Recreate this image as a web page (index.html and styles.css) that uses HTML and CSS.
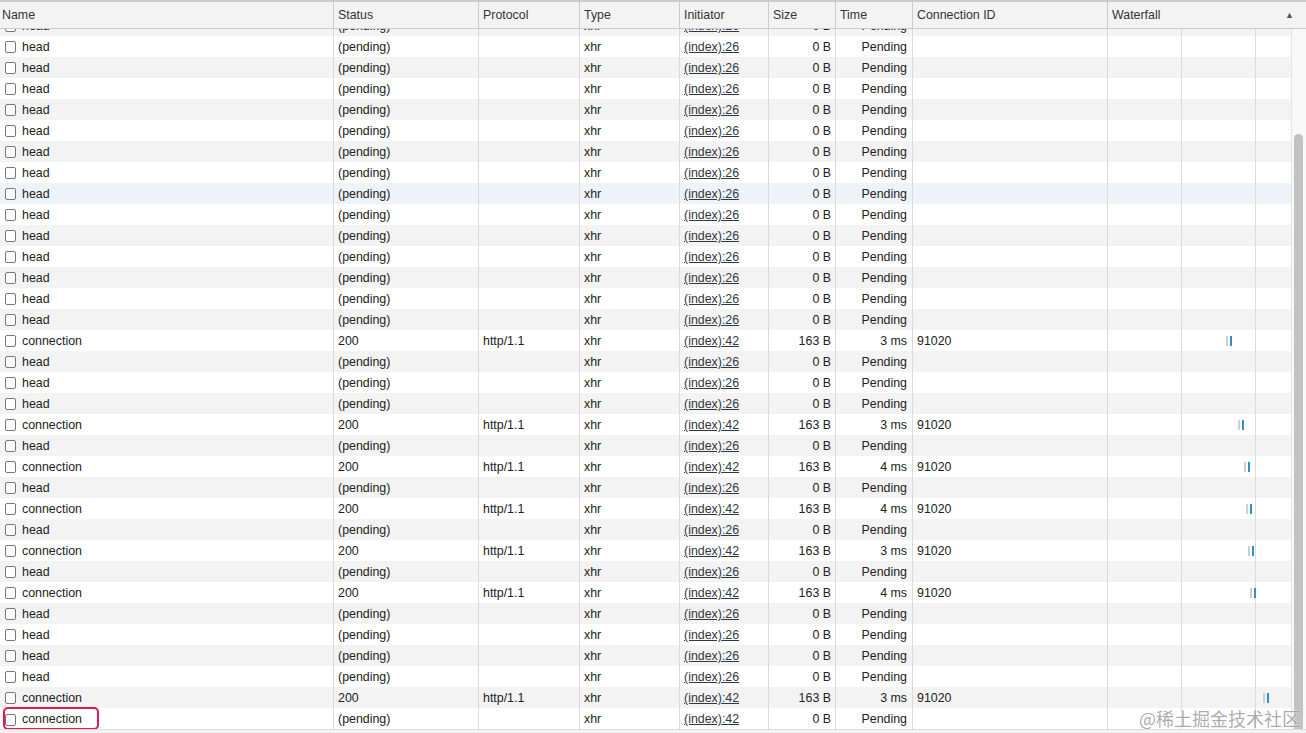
FILE: index.html
```html
<!doctype html>
<html>
<meta name="viewport" content="width=device-width, initial-scale=1">

<head>
  <title>Network</title>
  <link rel="stylesheet" href="styles.css">
</head>

<body>
  <div class="panel">
    <div class="row head-row">
      <div class="cell first">Name</div>
      <div class="cell">Status</div>
      <div class="cell">Protocol</div>
      <div class="cell">Type</div>
      <div class="cell">Initiator</div>
      <div class="cell">Size</div>
      <div class="cell">Time</div>
      <div class="cell">Connection ID</div>
      <div class="cell waterfall-head">Waterfall <span class="sort">&#9650;</span></div>
    </div>
    <div class="body">
      <div class="list" id="list"></div>
      <div class="scrollbar">
        <div class="thumb"></div>
      </div>
    </div>
    <div class="footer"></div>
    <div class="watermark">@稀土掘金技术社区</div>
  </div>
  <script>
    // h = head request, c = finished connection, p = pending connection
    let rows = "h hhhhhhhhhhhhhh chhh chc hc hc hc hhhh cp".replace(/ /g, "");
    let bars = [114, 126, 132, 134, 136, 138, 151];
    let times = ["3 ms", "3 ms", "4 ms", "4 ms", "3 ms", "4 ms", "3 ms"];
    let list = document.getElementById('list');
    let n = 0;
    for (let i = 0; i < rows.length; i++) {
      let k = rows[i];
      let row = document.createElement('div');
      row.className = 'row';
      if (i % 2 == 0) row.className += ' alt';
      if (i == 8) row.className += ' hover';
      let cells;
      if (k == 'c') {
        cells = ['connection', '200', 'http/1.1', 'xhr', '42', '163 B', times[n], '91020',
          '<span class="bar" style="margin-left:' + bars[n] + 'px"></span>'];
        n++;
      } else if (k == 'p') {
        cells = ['connection', '(pending)', '', 'xhr', '42', '0 B', 'Pending', '', ''];
      } else {
        cells = ['head', '(pending)', '', 'xhr', '26', '0 B', 'Pending', '', ''];
      }
      row.innerHTML =
        '<div class="cell first name' + (k == 'p' ? ' marked' : '') + '"><span class="check"></span>' + cells[0] + '</div>' +
        '<div class="cell">' + cells[1] + '</div>' +
        '<div class="cell">' + cells[2] + '</div>' +
        '<div class="cell">' + cells[3] + '</div>' +
        '<div class="cell"><span class="link">(index)</span><span class="link">:' + cells[4] + '</span></div>' +
        '<div class="cell num">' + cells[5] + '</div>' +
        '<div class="cell num time">' + cells[6] + '</div>' +
        '<div class="cell">' + cells[7] + '</div>' +
        '<div class="cell wf">' + cells[8] + '</div>';
      list.appendChild(row);
    }
  </script>
</body>

</html>
```

FILE: styles.css
```css
body {
  margin: 0;
  background: #fff;
  font: 12.4px "Liberation Sans", Arial, sans-serif;
  color: #222;
}

.panel {
  position: relative;
  width: 1306px;
  height: 733px;
  overflow: hidden;
}

.row {
  display: grid;
  grid-template-columns: 333px 145px 101px 100px 89px 67px 77px 195px 1fr;
  height: 21px;
  line-height: 21px;
  flex-shrink: 0;
}

.cell {
  box-sizing: border-box;
  border-left: 1px solid #dadada;
  padding: 0 4px;
  white-space: nowrap;
  overflow: hidden;
}

.cell.first {
  border-left: none;
}

/* header */
.head-row {
  height: 26px;
  line-height: 26px;
  border-top: 2px solid #cbcbcb;
  border-bottom: 1px solid #cbcbcb;
  background: #f3f3f3;
  color: #333;
}

.head-row .cell {
  border-left-color: #cbcbcb;
}

.head-row .first {
  padding-left: 2px;
}

.waterfall-head {
  display: flex;
  justify-content: space-between;
  padding-right: 12px;
}

.sort {
  font-size: 9px;
  color: #555;
}

/* body: newest rows stay at the bottom, older ones clip off the top */
.body {
  display: flex;
  height: 700px;
}

.list {
  flex: 1;
  display: flex;
  flex-direction: column;
  justify-content: flex-end;
  overflow: hidden;
}

.list .cell {
  padding-top: 1px;
}

.list .row.alt {
  background: #f3f3f3;
}

.list .row.hover {
  background: #eef3fa;
}

.scrollbar {
  width: 14px;
  border-left: 1px solid #e4e4e4;
  background: #f8f8f8;
  padding-top: 105px;
  display: flex;
  flex-direction: column;
}

.thumb {
  flex: 1;
  width: 9px;
  margin-left: 2px;
  background: #c2c2c2;
  border-radius: 5px 5px 0 0;
}

.name {
  display: flex;
  align-items: center;
  padding-left: 5px;
}

.check {
  width: 9px;
  height: 10px;
  border: 1px solid #777;
  border-radius: 2px;
  margin-right: 6px;
  background: #fff;
}

.marked {
  position: relative;
  overflow: visible;
}

.marked::after {
  content: "";
  position: absolute;
  left: 3px;
  top: -1px;
  width: 92px;
  height: 19px;
  border: 2px solid #e3184c;
  border-radius: 5px;
}

.link {
  text-decoration: underline;
  color: #303942;
}

.num {
  text-align: right;
}

.time {
  padding-right: 5px;
}

.wf {
  display: flex;
  align-items: center;
  background-image: linear-gradient(to right,
      transparent 73px, #dcdcdc 73px, #dcdcdc 74px, transparent 74px,
      transparent 147px, #dcdcdc 147px, #dcdcdc 148px, transparent 148px);
}

.bar {
  width: 6px;
  height: 10px;
  background: linear-gradient(to right, #cfcfcf 0 2px, transparent 2px 4px, #2c8fd8 4px);
}

.footer {
  height: 3px;
  border-top: 1px solid #dcdcdc;
  background: #f3f3f3;
}

.watermark {
  position: absolute;
  right: 6px;
  bottom: 2px;
  font: 18px "Noto Sans CJK SC", sans-serif;
  color: rgba(100, 100, 100, 0.55);
  text-shadow: 0 0 2px #fff;
}
```
